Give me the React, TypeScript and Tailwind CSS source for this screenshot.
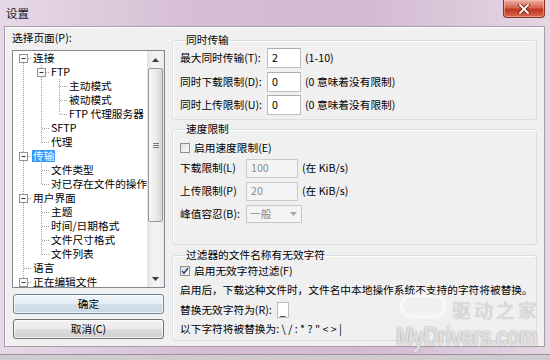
import React from "react";

type G = "v" | "t" | "l" | "ef" | "em";

function Guide({ t }: { t: G }) {
  const c = "#a0a0a0";
  const d = "1 1";
  const isExp = t === "ef" || t === "em";
  return (
    <svg width="18" height="14" viewBox="0 0 18 14" className="block shrink-0">
      {(t === "v" || t === "t") && (
        <line x1="9.5" y1="0" x2="9.5" y2="14" stroke={c} strokeDasharray={d} />
      )}
      {t === "l" && <line x1="9.5" y1="0" x2="9.5" y2="7.5" stroke={c} strokeDasharray={d} />}
      {(t === "t" || t === "l") && (
        <line x1="10" y1="7.5" x2="18" y2="7.5" stroke={c} strokeDasharray={d} />
      )}
      {isExp && (
        <>
          {t === "em" && <line x1="9.5" y1="0" x2="9.5" y2="3" stroke={c} strokeDasharray={d} />}
          <line x1="9.5" y1="12" x2="9.5" y2="14" stroke={c} strokeDasharray={d} />
          <line x1="14" y1="7.5" x2="18" y2="7.5" stroke={c} strokeDasharray={d} />
          <rect x="5.5" y="3.5" width="8" height="8" fill="#fafafa" stroke="#939393" />
          <line x1="7.5" y1="7.5" x2="11.5" y2="7.5" stroke="#3a3a3a" />
        </>
      )}
    </svg>
  );
}

const rows: { g: G[]; text: string; sel?: boolean }[] = [
  { g: ["ef"], text: "连接" },
  { g: ["v", "em"], text: "FTP" },
  { g: ["v", "v", "t"], text: "主动模式" },
  { g: ["v", "v", "t"], text: "被动模式" },
  { g: ["v", "v", "l"], text: "FTP 代理服务器" },
  { g: ["v", "t"], text: "SFTP" },
  { g: ["v", "l"], text: "代理" },
  { g: ["em"], text: "传输", sel: true },
  { g: ["v", "t"], text: "文件类型" },
  { g: ["v", "l"], text: "对已存在文件的操作" },
  { g: ["em"], text: "用户界面" },
  { g: ["v", "t"], text: "主题" },
  { g: ["v", "t"], text: "时间/日期格式" },
  { g: ["v", "t"], text: "文件尺寸格式" },
  { g: ["v", "l"], text: "文件列表" },
  { g: ["t"], text: "语言" },
  { g: ["em"], text: "正在编辑文件" },
];

function Checkbox({ checked }: { checked?: boolean }) {
  return (
    <div className="w-[10px] h-[10px] border border-[#8f8f8f] bg-[linear-gradient(135deg,#dcdcdc,#fbfbfb)] mr-[4px] shrink-0 flex items-center justify-center">
      {checked && (
        <svg width="8" height="8" viewBox="0 0 8 8">
          <path d="M1 4 L3 6.3 L7 1" fill="none" stroke="#2d4a7a" strokeWidth="1.6" />
        </svg>
      )}
    </div>
  );
}

function TextBox({ value, w, h, disabled }: { value: string; w: string; h: string; disabled?: boolean }) {
  return (
    <div
      className={`${w} ${h} border flex items-center pl-[4px] shrink-0 ${
        disabled
          ? "bg-[#f4f4f4] border-[#cacaca] text-[#8c8c8c]"
          : "bg-white border-[#b9bdc4] border-t-[#a9adb4] text-black"
      }`}
    >
      {value}
    </div>
  );
}

function Arrow({ up }: { up?: boolean }) {
  return (
    <svg width="7" height="4" viewBox="0 0 7 4">
      <path d={up ? "M0 4 L3.5 0 L7 4 Z" : "M0 0 L3.5 4 L7 0 Z"} fill="#3c3c3c" />
    </svg>
  );
}

export default function App() {
  return (
    <div className="relative w-[550px] h-[360px] overflow-hidden bg-[linear-gradient(90deg,#e6d8e6,#d6bed5_35%,#d3b9d2_65%,#e4d6e3)] font-['Noto_Sans_CJK_SC',sans-serif] text-[10.7px] leading-[14px] text-black">
      {/* title bar */}
      <div className="h-[26px] flex items-start">
        <div className="pl-[6px] pt-[6px] text-[11.5px] text-[#1a1a1a] flex-1">设置</div>
        <div className="mr-[5px] w-[42px] h-[18px] rounded-b-[4px] border border-t-0 border-[#8a3325] bg-[linear-gradient(180deg,#eab0a2,#d7644c_45%,#c0381f_55%,#d8674d)] flex items-center justify-center shadow-[inset_0_0_0_1px_rgba(255,200,190,0.5)]">
          <svg width="12" height="10" viewBox="0 0 12 10">
            <path d="M2 1 L10 9 M10 1 L2 9" stroke="#5a1a10" strokeWidth="3.2" strokeLinecap="square" />
            <path d="M2 1 L10 9 M10 1 L2 9" stroke="#ffffff" strokeWidth="1.8" strokeLinecap="square" />
          </svg>
        </div>
      </div>

      {/* content */}
      <div className="ml-[4px] w-[541px] h-[321px] bg-[#f0f0f0] border border-[#a89bab] shadow-[inset_1px_1px_0_#ffffff] flex">
        {/* left */}
        <div className="w-[160px] pl-[7px] pt-[4px] flex flex-col shrink-0">
          <div className="h-[14px]">选择页面(P):</div>
          <div className="mt-[5px] w-[153px] h-[238px] border border-[#828790] bg-white flex">
            <div className="flex-1 overflow-hidden pl-[1px]">
              {rows.map((r, i) => (
                <div key={i} className="h-[14px] flex items-center">
                  {r.g.map((g, j) => (
                    <Guide key={j} t={g} />
                  ))}
                  <span
                    className={`px-[1px] h-[12px] leading-[12px] whitespace-nowrap ${
                      r.sel ? "bg-[#3399ff] text-white" : ""
                    }`}
                  >
                    {r.text}
                  </span>
                </div>
              ))}
            </div>
            <div className="w-[17px] shrink-0 flex flex-col bg-[linear-gradient(90deg,#e3e3e3,#f3f3f3_40%,#f3f3f3_70%,#e8e8e8)]">
              <div className="h-[17px] flex items-center justify-center">
                <Arrow up />
              </div>
              <div className="mx-[1px] h-[154px] rounded-[2px] border border-[#989898] bg-[linear-gradient(90deg,#f7f7f7,#ececec_50%,#d6d6d6)] flex items-center justify-center">
                <div className="flex flex-col gap-[1px]">
                  <div className="w-[6px] h-[1px] bg-[#7a7a7a]" />
                  <div className="w-[6px] h-[1px] bg-[#7a7a7a]" />
                  <div className="w-[6px] h-[1px] bg-[#7a7a7a]" />
                </div>
              </div>
              <div className="flex-1" />
              <div className="h-[17px] flex items-center justify-center">
                <Arrow />
              </div>
            </div>
          </div>
          <div className="mt-[6px] ml-[1px] w-[151px] h-[20px] rounded-[3px] border border-[#6b87a0] bg-[linear-gradient(180deg,#f1f6fa,#e3edf4_50%,#d3e0ea_51%,#cbd9e4)] flex items-center justify-center shadow-[inset_0_0_0_1px_rgba(255,255,255,0.7)]">
            确定
          </div>
          <div className="mt-[5px] ml-[1px] w-[151px] h-[20px] rounded-[3px] border border-[#707070] bg-[linear-gradient(180deg,#f2f2f2,#ebebeb_50%,#dddddd_51%,#cfcfcf)] flex items-center justify-center shadow-[inset_0_0_0_1px_rgba(255,255,255,0.7)]">
            取消(C)
          </div>
        </div>

        {/* right */}
        <div className="flex-1 pl-[7px] pr-[7px] pt-[6px] flex flex-col">
          <fieldset className="h-[87px] border border-[#d5dfe5] rounded-[3px] pl-[7px] shadow-[inset_1px_1px_0_#fff]">
            <legend className="ml-[5px] px-[1px] leading-[14px]">同时传输</legend>
            <div className="mt-[1px] flex flex-col gap-[3.5px]">
              <div className="h-[20px] flex items-center">
                <div className="w-[87px]">最大同时传输(T):</div>
                <TextBox value="2" w="w-[34px]" h="h-[20px]" />
                <div className="ml-[4px]">(1-10)</div>
              </div>
              <div className="h-[20px] flex items-center">
                <div className="w-[87px]">同时下载限制(D):</div>
                <TextBox value="0" w="w-[34px]" h="h-[20px]" />
                <div className="ml-[4px]">(0 意味着没有限制)</div>
              </div>
              <div className="h-[20px] flex items-center">
                <div className="w-[87px]">同时上传限制(U):</div>
                <TextBox value="0" w="w-[34px]" h="h-[20px]" />
                <div className="ml-[4px]">(0 意味着没有限制)</div>
              </div>
            </div>
          </fieldset>

          <fieldset className="mt-[2px] h-[123px] border border-[#d5dfe5] rounded-[3px] pl-[7px] shadow-[inset_1px_1px_0_#fff]">
            <legend className="ml-[5px] px-[1px] leading-[14px]">速度限制</legend>
            <div className="mt-[5px] h-[14px] flex items-center">
              <Checkbox />
              <span>启用速度限制(E)</span>
            </div>
            <div className="mt-[3px] flex flex-col gap-[3px]">
              <div className="h-[20px] flex items-center">
                <div className="w-[66px]">下载限制(L)</div>
                <TextBox value="100" w="w-[52px]" h="h-[19px]" disabled />
                <div className="ml-[4px]">(在 KiB/s)</div>
              </div>
              <div className="h-[20px] flex items-center">
                <div className="w-[66px]">上传限制(P)</div>
                <TextBox value="20" w="w-[52px]" h="h-[19px]" disabled />
                <div className="ml-[4px]">(在 KiB/s)</div>
              </div>
              <div className="h-[20px] flex items-center">
                <div className="w-[66px]">峰值容忍(B):</div>
                <div className="w-[56px] h-[18px] border border-[#c6c6c6] bg-[#f4f4f4] text-[#8c8c8c] flex items-center pl-[3px] pr-[4px]">
                  <span className="flex-1">一般</span>
                  <svg width="7" height="4" viewBox="0 0 7 4">
                    <path d="M0 0 L3.5 4 L7 0 Z" fill="#a8a8a8" />
                  </svg>
                </div>
              </div>
            </div>
          </fieldset>

          <fieldset className="mt-[3px] h-[93px] border border-[#d5dfe5] rounded-[3px] pl-[7px] shadow-[inset_1px_1px_0_#fff]">
            <legend className="ml-[5px] px-[1px] leading-[14px]">过滤器的文件名称有无效字符</legend>
            <div className="mt-[2px] h-[14px] flex items-center">
              <Checkbox checked />
              <span>启用无效字符过滤(F)</span>
            </div>
            <div className="mt-[5px] h-[14px] whitespace-nowrap">
              启用后，下载这种文件时，文件名中本地操作系统不支持的字符将被替换。
            </div>
            <div className="mt-[5px] h-[16px] flex items-center">
              <span>替换无效字符为(R):</span>
              <div className="ml-[5px] w-[12px] h-[16px] bg-white border border-[#b9bdc4] flex items-end justify-center leading-[12px]">
                _
              </div>
            </div>
            <div className="mt-[4px] h-[14px] whitespace-nowrap">以下字符将被替换为: \ / : * ? " &lt; &gt; |</div>
          </fieldset>
        </div>
      </div>

      {/* bottom frame */}
      <div className="h-[7px]" />
      <div className="h-[1px] bg-[#9d91a0]" />
      <div className="h-[5px] bg-[#cfcbd1]" />

      {/* watermark */}
      <div className="absolute left-[452px] top-[299px] text-[19px] leading-[21px] text-white/60 font-['Noto_Sans_CJK_SC',serif] tracking-[3px] [text-shadow:0_0_1px_#9a9a9a]">
        驱动之家
      </div>
      <div className="absolute left-[400px] top-[294px] w-[46px] h-[24px] rounded-full border-[3px] border-white/50" />
      <div className="absolute left-[396px] top-[321px] origin-left scale-x-[0.75] text-[28px] leading-[32px] font-bold text-white/70 font-['Liberation_Sans',sans-serif] tracking-[-1px] whitespace-nowrap [text-shadow:0_0_2px_#8a8a8a]">
        MyDrivers.com
      </div>
    </div>
  );
}
